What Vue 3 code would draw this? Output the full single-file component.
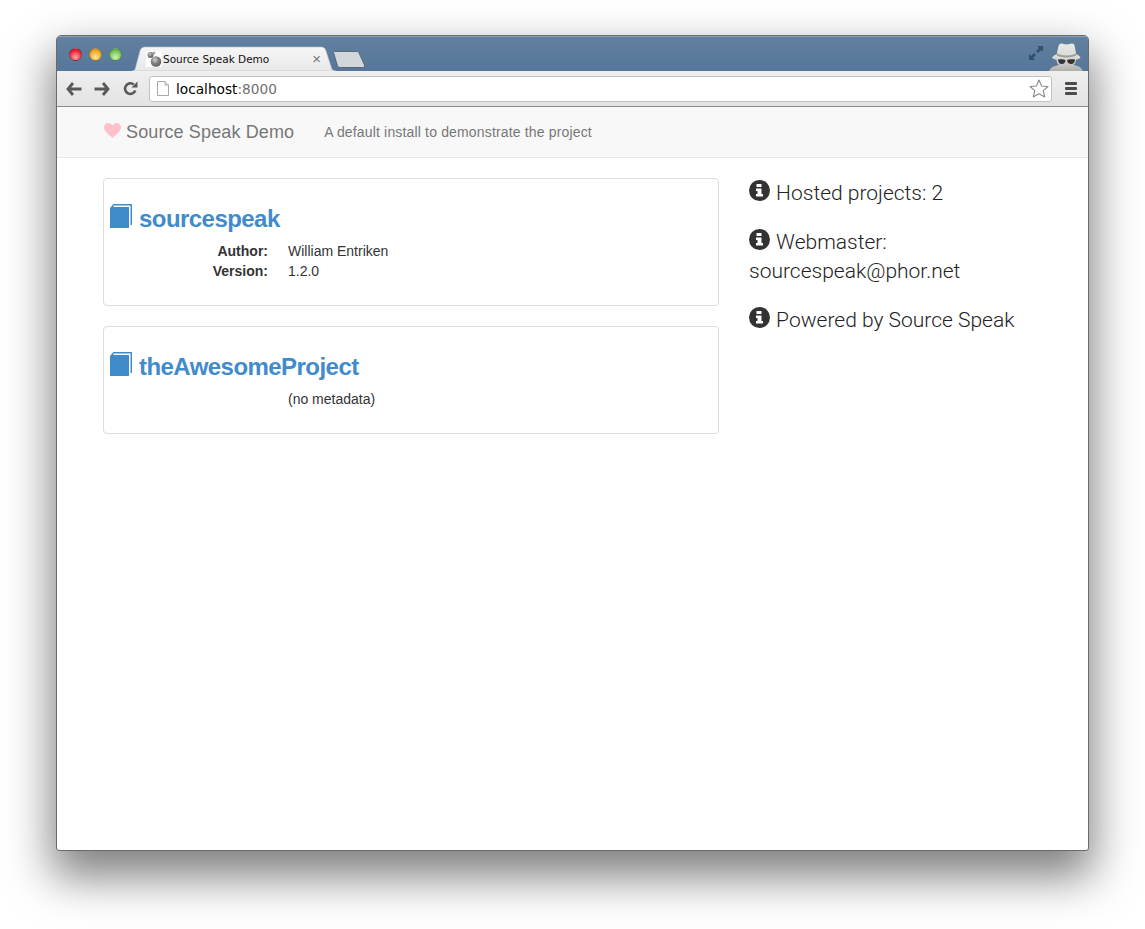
<template>
  <div class="page">
    <div class="window">
      <div class="titlebar">
        <div class="lights">
          <span class="light red"></span>
          <span class="light amber"></span>
          <span class="light green"></span>
        </div>
        <div class="tab">
          <svg class="tab-shape" width="204" height="25" viewBox="0 0 204 25">
            <defs>
              <linearGradient id="tabFill" x1="0" y1="0" x2="0" y2="1">
                <stop offset="0" stop-color="#f6f6f6" />
                <stop offset="1" stop-color="#e8e8e8" />
              </linearGradient>
            </defs>
            <path d="M0 25 C2 25 3 24 3.500 22 L8 5 C9 2 10.500 1 13 1 L189 1 C192 1 193 2 194 5 L199.500 22 C200 24 201.500 25 204 25 Z" fill="url(#tabFill)" stroke="#b9c3cf" stroke-width="0.6" />
          </svg>
          <svg class="favicon" width="16" height="16" viewBox="0 0 16 16">
            <defs>
              <radialGradient id="ball" cx="0.4" cy="0.35" r="0.7">
                <stop offset="0" stop-color="#d4d4d4" />
                <stop offset="0.5" stop-color="#7f8081" />
                <stop offset="1" stop-color="#5c5d5e" />
              </radialGradient>
            </defs>
            <rect width="16" height="16" fill="#fff" />
            <circle cx="10" cy="10.500" r="5.300" fill="url(#ball)" />
            <circle cx="4.500" cy="4" r="3" fill="url(#ball)" />
            <circle cx="8" cy="2" r="1.500" fill="#a8a8a8" />
          </svg>
          <span class="tab-title">Source Speak Demo</span>
          <span class="tab-close">×</span>
        </div>
        <svg class="new-tab" width="32" height="17" viewBox="0 0 32 17">
          <path d="M.5 1.500 C.5 1 1 .5 1.500 .5 L24 .5 C25 .5 25.600 1 26 2 L31.500 14 C32 15.500 31 16.500 29.500 16.500 L7 16.500 C5.500 16.500 4.800 15.500 4.400 14.500 Z" fill="#d3d6da" stroke="#4d6279" stroke-width=".9" />
        </svg>
        <div class="title-right">
          <svg class="fullscreen" width="16" height="16" viewBox="0 0 16 16">
            <path d="M9 1 H15 V7 L13 5 L10 8 L8 6 L11 3 Z" fill="#324f6e" />
            <path d="M7 15 H1 V9 L3 11 L6 8 L8 10 L5 13 Z" fill="#324f6e" />
          </svg>
          <svg class="incognito" width="34" height="28" viewBox="0 0 34 28">
            <defs>
              <linearGradient id="spy" x1="0" y1="0" x2="0" y2="1">
                <stop offset="0" stop-color="#e9e9e6" />
                <stop offset="0.6" stop-color="#d6d6d2" />
                <stop offset="1" stop-color="#aeaeaa" />
              </linearGradient>
            </defs>
            <path d="M9 5 C9.500 2 10.500 .5 12.500 .5 C14 .5 15.500 1.500 17.500 1.500 C19.500 1.500 21 .5 23 .5 C25 .5 25.800 2 26 5 L27.200 11 C29 12 31 13 31.500 14.500 C30.500 16 28.500 16.500 27 16.500 C27 19 26 21 24.500 22 C27 22.500 31 23.500 32 25 L34 28 H0 L2 25 C3.500 23.500 7 22.500 10 22 C8.500 21 7.500 19 7.500 16.500 C6 16.500 4 16 3 14.500 C4 13 6 12 7.800 11 Z" fill="url(#spy)" />
            <path d="M8 10.500 C13 13 22 13 27 10.500 L27.300 12.500 C22 15 13 15 7.700 12.500 Z" fill="#9f9f9b" />
            <path d="M9 16.500 C11 16 15 16 16.500 17 C16.500 19.500 15 21 12.800 21 C10.500 21 9 19 9 16.500 Z M18 17 C19.500 16 24 16 26 16.500 C26 19 24.500 21 22 21 C20 21 18 19.500 18 17 Z" fill="#333" />
          </svg>
        </div>
      </div>

      <div class="toolbar">
        <svg class="nav-icon" width="16" height="14" viewBox="0 0 16 14">
          <path d="M7 1 L2 7 L7 13 M2 7 H15.500" fill="none" stroke="#595959" stroke-width="2.800" />
        </svg>
        <svg class="nav-icon" width="16" height="14" viewBox="0 0 16 14">
          <path d="M9 1 L14 7 L9 13 M14 7 H.5" fill="none" stroke="#595959" stroke-width="2.800" />
        </svg>
        <svg class="nav-icon reload" width="15" height="15" viewBox="0 0 15 15">
          <path d="M12.300 9.500 A5.300 5.300 0 1 1 10.800 3.600" fill="none" stroke="#595959" stroke-width="2.600" />
          <path d="M8.500 6.500 L14.500 6.500 L14.500 .5 Z" fill="#595959" />
        </svg>
        <div class="omnibox">
          <svg class="page-icon" width="12" height="15" viewBox="0 0 12 15">
            <path d="M.5 .5 H8 L11.500 4 V14.500 H.5 Z" fill="#fdfdfd" stroke="#a9a9a9" />
            <path d="M8 .5 V4 H11.500" fill="#e8e8e8" stroke="#a9a9a9" />
          </svg>
          <span class="url">localhost<span class="port">:8000</span></span>
          <svg class="star" width="20" height="19" viewBox="0 0 20 19">
            <path d="M10 1 L12.600 7 L19 7.500 L14.200 11.700 L15.700 18 L10 14.700 L4.300 18 L5.800 11.700 L1 7.500 L7.400 7 Z" fill="#fff" stroke="#8a8a8a" stroke-width="1.100" stroke-linejoin="round" />
          </svg>
        </div>
        <div class="menu-btn">
          <span></span><span></span><span></span>
        </div>
      </div>

      <nav class="navbar">
        <svg class="heart" width="17" height="15" viewBox="0 0 17 15">
          <path d="M8.500 15 C6 12.500 0 8.500 0 4.500 C0 2 2 0 4.500 0 C6.200 0 7.700 1 8.500 2.500 C9.300 1 10.800 0 12.500 0 C15 0 17 2 17 4.500 C17 8.500 11 12.500 8.500 15 Z" fill="#ffc0cb" />
        </svg>
        <a class="brand">Source Speak Demo</a>
        <span class="tagline">A default install to demonstrate the project</span>
      </nav>

      <main class="content">
        <section class="projects">
          <article v-for="project in projects" :key="project.name" class="card">
            <h2 class="project-name">
              <svg class="book" width="22" height="24" viewBox="0 0 22 24">
                <path d="M3 0 H22 V21 H20.500 V1.500 H3 Z" fill="#428bca" />
                <path d="M3 0.500 L3.800 3 H19 V24 H0 V4 Z" fill="#428bca" />
              </svg>
              <a>{{ project.name }}</a>
            </h2>
            <dl v-if="project.meta.length" class="meta">
              <template v-for="row in project.meta" :key="row.label">
                <dt>{{ row.label }}:</dt>
                <dd>{{ row.value }}</dd>
              </template>
            </dl>
            <dl v-else class="meta">
              <dt></dt>
              <dd>(no metadata)</dd>
            </dl>
          </article>
        </section>

        <aside class="sidebar">
          <p v-for="item in info" :key="item">
            <svg class="info" width="21" height="21" viewBox="0 0 21 21">
              <circle cx="10.500" cy="10.500" r="10.500" fill="#333" />
              <path d="M7.500 4 H12.500 V7 H7.500 Z M7 8.500 H12.500 V14 H14 V16.500 H7 V14 H8.500 V11 H7 Z" fill="#fff" />
            </svg>
            {{ item }}
          </p>
        </aside>
      </main>
    </div>
  </div>
</template>

<script setup>
const projects = [
  {
    name: 'sourcespeak',
    meta: [
      { label: 'Author', value: 'William Entriken' },
      { label: 'Version', value: '1.2.0' },
    ],
  },
  { name: 'theAwesomeProject', meta: [] },
]

const info = [
  'Hosted projects: 2',
  'Webmaster: sourcespeak@phor.net',
  'Powered by Source Speak',
]
</script>

<style scoped>
.page {
  width: 1145px;
  height: 929px;
  padding: 35px 0 0 56px;
  box-sizing: border-box;
  background: #fff;
  overflow: hidden;
  font-family: "Liberation Sans", Arial, sans-serif;
  color: #333;
}

.window {
  width: 1033px;
  height: 816px;
  box-sizing: border-box;
  border: 1px solid #6a6a6a;
  border-radius: 5px 5px 3px 3px;
  background: #fff;
  box-shadow: 0 22px 45px 4px rgba(0, 0, 0, 0.5);
  overflow: hidden;
  display: flex;
  flex-direction: column;
}

.titlebar {
  height: 35px;
  flex: none;
  display: flex;
  align-items: flex-end;
  background: linear-gradient(#62809f, #56779a);
  border-top: 1px solid #8aa0b7;
  box-sizing: border-box;
}

.lights {
  display: flex;
  gap: 7px;
  align-self: flex-start;
  margin: 11px 0 0 12px;
}

.light {
  width: 13px;
  height: 13px;
  border-radius: 50%;
  box-sizing: border-box;
  border: 1px solid rgba(40, 50, 70, 0.4);
}

.red {
  background: radial-gradient(circle at 50% 75%, #ffa5a5, #ea1c30 70%);
}

.amber {
  background: radial-gradient(circle at 50% 75%, #ffe59a, #eda31c 70%);
}

.green {
  background: radial-gradient(circle at 50% 75%, #ccf8ad, #6dbd4c 70%);
}

.tab {
  position: relative;
  width: 204px;
  height: 25px;
  margin-left: 10px;
  display: flex;
  align-items: center;
  flex: none;
}

.tab-shape {
  position: absolute;
  left: 0;
  top: 0;
}

.favicon {
  position: relative;
  margin-left: 14px;
  flex: none;
}

.tab-title {
  position: relative;
  font-family: "DejaVu Sans", sans-serif;
  font-size: 10.500px;
  color: #111;
  margin-left: 1px;
}

.tab-close {
  position: absolute;
  right: 15px;
  top: 4px;
  font-size: 15px;
  line-height: 17px;
  color: #777;
}

.new-tab {
  margin: 0 0 3px -3px;
  flex: none;
}

.title-right {
  margin-left: auto;
  display: flex;
  align-items: flex-end;
  gap: 5px;
  margin-right: 5px;
}

.fullscreen {
  margin-bottom: 10px;
}

.toolbar {
  height: 36px;
  flex: none;
  display: flex;
  align-items: center;
  box-sizing: border-box;
  background: linear-gradient(#efefef, #e3e3e3);
  border-bottom: 1px solid #8c8c8c;
  padding: 0 9px;
}

.nav-icon {
  flex: none;
  margin-right: 12px;
}

.reload {
  margin-left: 1px;
}

.omnibox {
  flex: 1;
  height: 26px;
  margin-left: -1px;
  display: flex;
  align-items: center;
  box-sizing: border-box;
  background: #fff;
  border: 1px solid #c2c2c2;
  border-radius: 3px;
  padding: 0 2px 0 7px;
}

.url {
  font-family: "DejaVu Sans", sans-serif;
  font-size: 13.700px;
  color: #000;
  margin-left: 7px;
  flex: 1;
}

.port {
  color: #6f6f6f;
}

.menu-btn {
  width: 12px;
  margin-left: 13px;
  margin-right: 2px;
  display: flex;
  flex-direction: column;
  gap: 2px;
}

.menu-btn span {
  height: 3px;
  background: #4c4c4c;
  border-radius: 1px;
}

.navbar {
  height: 51px;
  flex: none;
  box-sizing: border-box;
  display: flex;
  align-items: center;
  padding: 1px 0 0 47px;
  background: #f8f8f8;
  border-bottom: 1px solid #e7e7e7;
  color: #777;
}

.heart {
  margin: -4px 5px 0 0;
}

.brand {
  font-size: 18px;
  letter-spacing: 0.12px;
}

.tagline {
  font-size: 14px;
  margin: 0 0 2px 30px;
  letter-spacing: 0.16px;
}

.content {
  display: flex;
  gap: 30px;
  padding: 20px 0 0 46px;
}

.projects {
  width: 616px;
  display: flex;
  flex-direction: column;
  gap: 20px;
}

.card {
  border: 1px solid #ddd;
  border-radius: 4px;
  padding: 25px 6px 24px;
}

.project-name {
  display: flex;
  align-items: flex-end;
  gap: 7px;
  margin: 0 0 9px;
  font-size: 24px;
  line-height: 26px;
  font-weight: 700;
  color: #428bca;
  letter-spacing: -0.55px;
}

.book {
  flex: none;
  margin-bottom: 4px;
}

.meta {
  display: grid;
  grid-template-columns: 158px 1fr;
  column-gap: 20px;
  margin: 0;
  font-size: 14px;
  line-height: 20px;
}

.meta dt {
  text-align: right;
  font-weight: 700;
}

.meta dd {
  margin: 0;
}

.sidebar {
  width: 290px;
  padding-top: 1px;
  font-family: Roboto, "Liberation Sans", sans-serif;
  font-size: 21px;
  line-height: 29px;
  font-weight: 300;
  color: #222;
}

.sidebar p {
  margin: 0 0 20px;
}

.info {
  vertical-align: -1px;
  margin-right: 1px;
}
</style>

<style>
html,
body {
  background: #fff;
}
</style>
